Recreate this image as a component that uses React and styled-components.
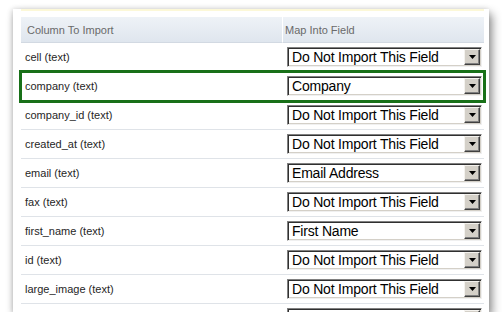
import styled, { createGlobalStyle } from 'styled-components';

const Global = createGlobalStyle`
  html, body { margin: 0; padding: 0; background: #fff; }
  body { font-family: "Liberation Sans", Arial, sans-serif; }
`;

const Panel = styled.div`
  margin: 9px 0 0 13px;
  width: 476px;
  height: 303px;
  background: #fff;
  overflow: hidden;
  box-shadow: 3px 5px 9px rgba(0, 0, 0, 0.45), -1px 0 5px rgba(0, 0, 0, 0.15);
  padding: 0 5px 0 8px;
  box-sizing: border-box;
`;

const Strip = styled.div`
  height: 2px;
  background: #fcf8d8;
  margin-bottom: 6px;
`;

const Table = styled.div`
  display: grid;
  grid-template-columns: 261px 202px;
`;

const Head = styled.div`
  height: 25px;
  display: flex;
  align-items: center;
  padding-left: ${p => p.$pad}px;
  font-size: 11px;
  color: #6a6a6a;
  background: linear-gradient(#eef2f7, #dfe6ee);
  border-bottom: 1px solid #d2d9e2;
  border-left: ${p => (p.$divider ? '1px solid #fff' : 'none')};
`;

const Row = styled.div`
  grid-column: 1 / 3;
  display: grid;
  grid-template-columns: 261px 202px;
  height: 29px;
  box-sizing: border-box;
  border-bottom: 1px solid #dfe3e8;
  outline: ${p => (p.$active ? '3px solid #187018' : 'none')};
  outline-offset: -1px;
`;

const Name = styled.div`
  display: flex;
  align-items: center;
  padding-left: 4px;
  font-size: 11px;
  color: #262626;
`;

const Cell = styled.div`
  display: flex;
  align-items: center;
  padding-left: 5px;
`;

const Select = styled.div`
  width: 195px;
  height: 20px;
  box-sizing: border-box;
  display: flex;
  align-items: center;
  border-style: solid;
  border-width: 1px;
  border-color: #808080 #f0f0f0 #f0f0f0 #808080;
  box-shadow: inset 1px 1px 0 #303030, inset -1px -1px 0 #d4d0c8;
  background: #fff;
  padding: 1px 1px 1px 4px;
`;

const Value = styled.span`
  flex: 1;
  font-size: 14px;
  letter-spacing: -0.2px;
  color: #000;
  white-space: nowrap;
  line-height: 16px;
`;

const Arrow = styled.div`
  width: 16px;
  height: 16px;
  box-sizing: border-box;
  background: #d4d0c8;
  border-style: solid;
  border-width: 1px;
  border-color: #f4f2ee #404040 #404040 #f4f2ee;
  box-shadow: inset -1px -1px 0 #808080;
  display: flex;
  align-items: center;
  justify-content: center;
`;

const rows = [
  ['cell (text)', 'Do Not Import This Field'],
  ['company (text)', 'Company', true],
  ['company_id (text)', 'Do Not Import This Field'],
  ['created_at (text)', 'Do Not Import This Field'],
  ['email (text)', 'Email Address'],
  ['fax (text)', 'Do Not Import This Field'],
  ['first_name (text)', 'First Name'],
  ['id (text)', 'Do Not Import This Field'],
  ['large_image (text)', 'Do Not Import This Field'],
  ['', ''],
];

export default function App() {
  return (
    <>
      <Global />
      <Panel>
        <Strip />
        <Table>
          <Head $pad={6}>Column To Import</Head>
          <Head $pad={2} $divider>Map Into Field</Head>
          {rows.map(([name, value, active], i) => (
            <Row key={i} $active={active}>
              <Name>{name}</Name>
              <Cell>
                <Select>
                  <Value>{value}</Value>
                  <Arrow>
                    <svg width="7" height="4" viewBox="0 0 7 4">
                      <path d="M0 0h7L3.5 4z" fill="#000" />
                    </svg>
                  </Arrow>
                </Select>
              </Cell>
            </Row>
          ))}
        </Table>
      </Panel>
    </>
  );
}
